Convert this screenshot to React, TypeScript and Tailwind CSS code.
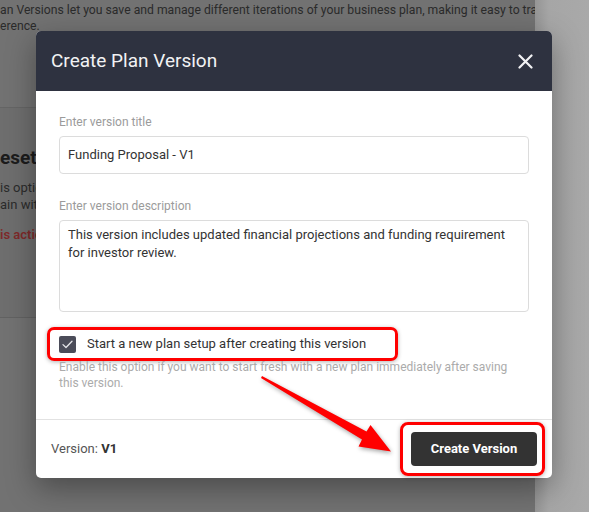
import { type ReactNode } from 'react';

const font = { fontFamily: 'Roboto, "Liberation Sans", Arial, sans-serif' };

function Field({ label, children }: { label: string; children: ReactNode }) {
  return (
    <div className="flex flex-col gap-[6px]">
      <span className="text-[12px] leading-[16px] text-[#9b9b9b]">{label}</span>
      {children}
    </div>
  );
}

// Dimmed settings page that sits behind the modal.
function Backdrop() {
  return (
    <div className="flex h-full w-full">
      <div className="flex h-full w-[535px] flex-col overflow-hidden bg-[#727272] text-[12.2px] leading-[16px] text-[#2b2b2b]">
        <p className="mt-[2px] whitespace-nowrap">
          an Versions let you save and manage different iterations of your business plan, making it easy to track changes
        </p>
        <p className="whitespace-nowrap">erence.</p>
        <div className="mt-[73px] h-px w-full bg-[#656565]" />
        <div className="flex flex-col bg-[#6e6e6e] pt-[38px] pb-[74px] text-[13px]">
          <h3 className="text-[19px] leading-[24px] font-bold text-[#1c1c1c]">eset</h3>
          <p className="mt-[9px] leading-[17px]">is option</p>
          <p className="leading-[17px]">ain with</p>
          <p className="mt-[13px] leading-[17px] font-semibold text-[#7e2a2a]">is action</p>
        </div>
        <div className="h-px w-full bg-[#626262]" />
      </div>
      <div className="h-full flex-1 bg-[linear-gradient(to_right,#959595,#a6a6a6_14px,#a9a9a9)]" />
    </div>
  );
}

function CheckIcon() {
  return (
    <svg width="11" height="9" viewBox="0 0 11 9" fill="none">
      <path d="M1 4.6 L4 7.5 L10 1.3" stroke="#e6e6ea" strokeWidth="1.3" strokeLinecap="round" strokeLinejoin="round" />
    </svg>
  );
}

function Arrow() {
  return (
    <svg
      className="pointer-events-none absolute top-0 left-0"
      width="589"
      height="512"
      viewBox="0 0 589 512"
      style={{ filter: 'drop-shadow(1px 2px 2px rgba(0,0,0,0.35))' }}
    >
      <polygon
        points="262,376 366.5,431.6 370.5,425 391,451.5 358.5,446.5 362,439.4 261,378"
        fill="#ff0000"
      />
    </svg>
  );
}

export default function App() {
  return (
    <div className="relative h-[512px] w-[589px] overflow-hidden" style={font}>
      <Backdrop />

      <div className="absolute top-[31px] left-[36px] flex w-[516px] flex-col rounded-[5px] bg-white shadow-[0_10px_30px_rgba(0,0,0,0.35)]">
        <header className="flex h-[60px] items-center justify-between rounded-t-[5px] bg-[#2e3240] pr-[19px] pl-[15px]">
          <h2 className="text-[19px] leading-[24px] font-normal text-[#f2f2f4]">Create Plan Version</h2>
          <svg width="15" height="15" viewBox="0 0 15 15">
            <path d="M1.5 1.5 L13.5 13.5 M13.5 1.5 L1.5 13.5" stroke="#f2f2f4" strokeWidth="2.2" strokeLinecap="round" />
          </svg>
        </header>

        <div className="flex flex-col px-[23px] pt-[23px] pb-[28px] text-[13px] text-[#333]">
          <Field label="Enter version title">
            <div className="flex h-[38px] items-center rounded-[4px] border border-[#dcdcdc] px-[8px] leading-[18px]">
              Funding Proposal - V1
            </div>
          </Field>

          <div className="mt-[24px]">
            <Field label="Enter version description">
              <div className="h-[92px] rounded-[4px] border border-[#dcdcdc] px-[8px] pt-[5px] leading-[18px]">
                This version includes updated financial projections and funding requirement for investor review.
              </div>
            </Field>
          </div>

          <div className="mt-[15px] -ml-[12px] flex h-[34px] w-[351px] items-center gap-[11px] rounded-[7px] border-[3px] border-[#ff0000] pl-[9px] shadow-[0_1px_4px_rgba(0,0,0,0.3)]">
            <span className="flex h-[17px] w-[17px] items-center justify-center rounded-[2px] bg-[#4b4c59]">
              <CheckIcon />
            </span>
            <span className="leading-[18px] text-[#333]">Start a new plan setup after creating this version</span>
          </div>

          <p className="-mt-[2px] text-[12px] leading-[16px] text-[#ababab]">
            Enable this option if you want to start fresh with a new plan immediately after saving this version.
          </p>
        </div>

        <footer className="flex items-center justify-between border-t border-[#e2e2e2] py-[2px] pr-[7px] pl-[15px]">
          <span className="text-[13px] text-[#555]">
            Version: <b className="font-bold text-[#333]">V1</b>
          </span>
          <div className="rounded-[8px] border-[3px] border-[#ff0000] py-[7px] pr-[5px] pl-[8px] shadow-[0_1px_4px_rgba(0,0,0,0.3)]">
            <button
              type="button"
              className="flex h-[34px] w-[126px] items-center justify-center rounded-[4px] bg-[#333333] text-[13px] font-bold text-white"
            >
              Create Version
            </button>
          </div>
        </footer>
      </div>

      <Arrow />
    </div>
  );
}
